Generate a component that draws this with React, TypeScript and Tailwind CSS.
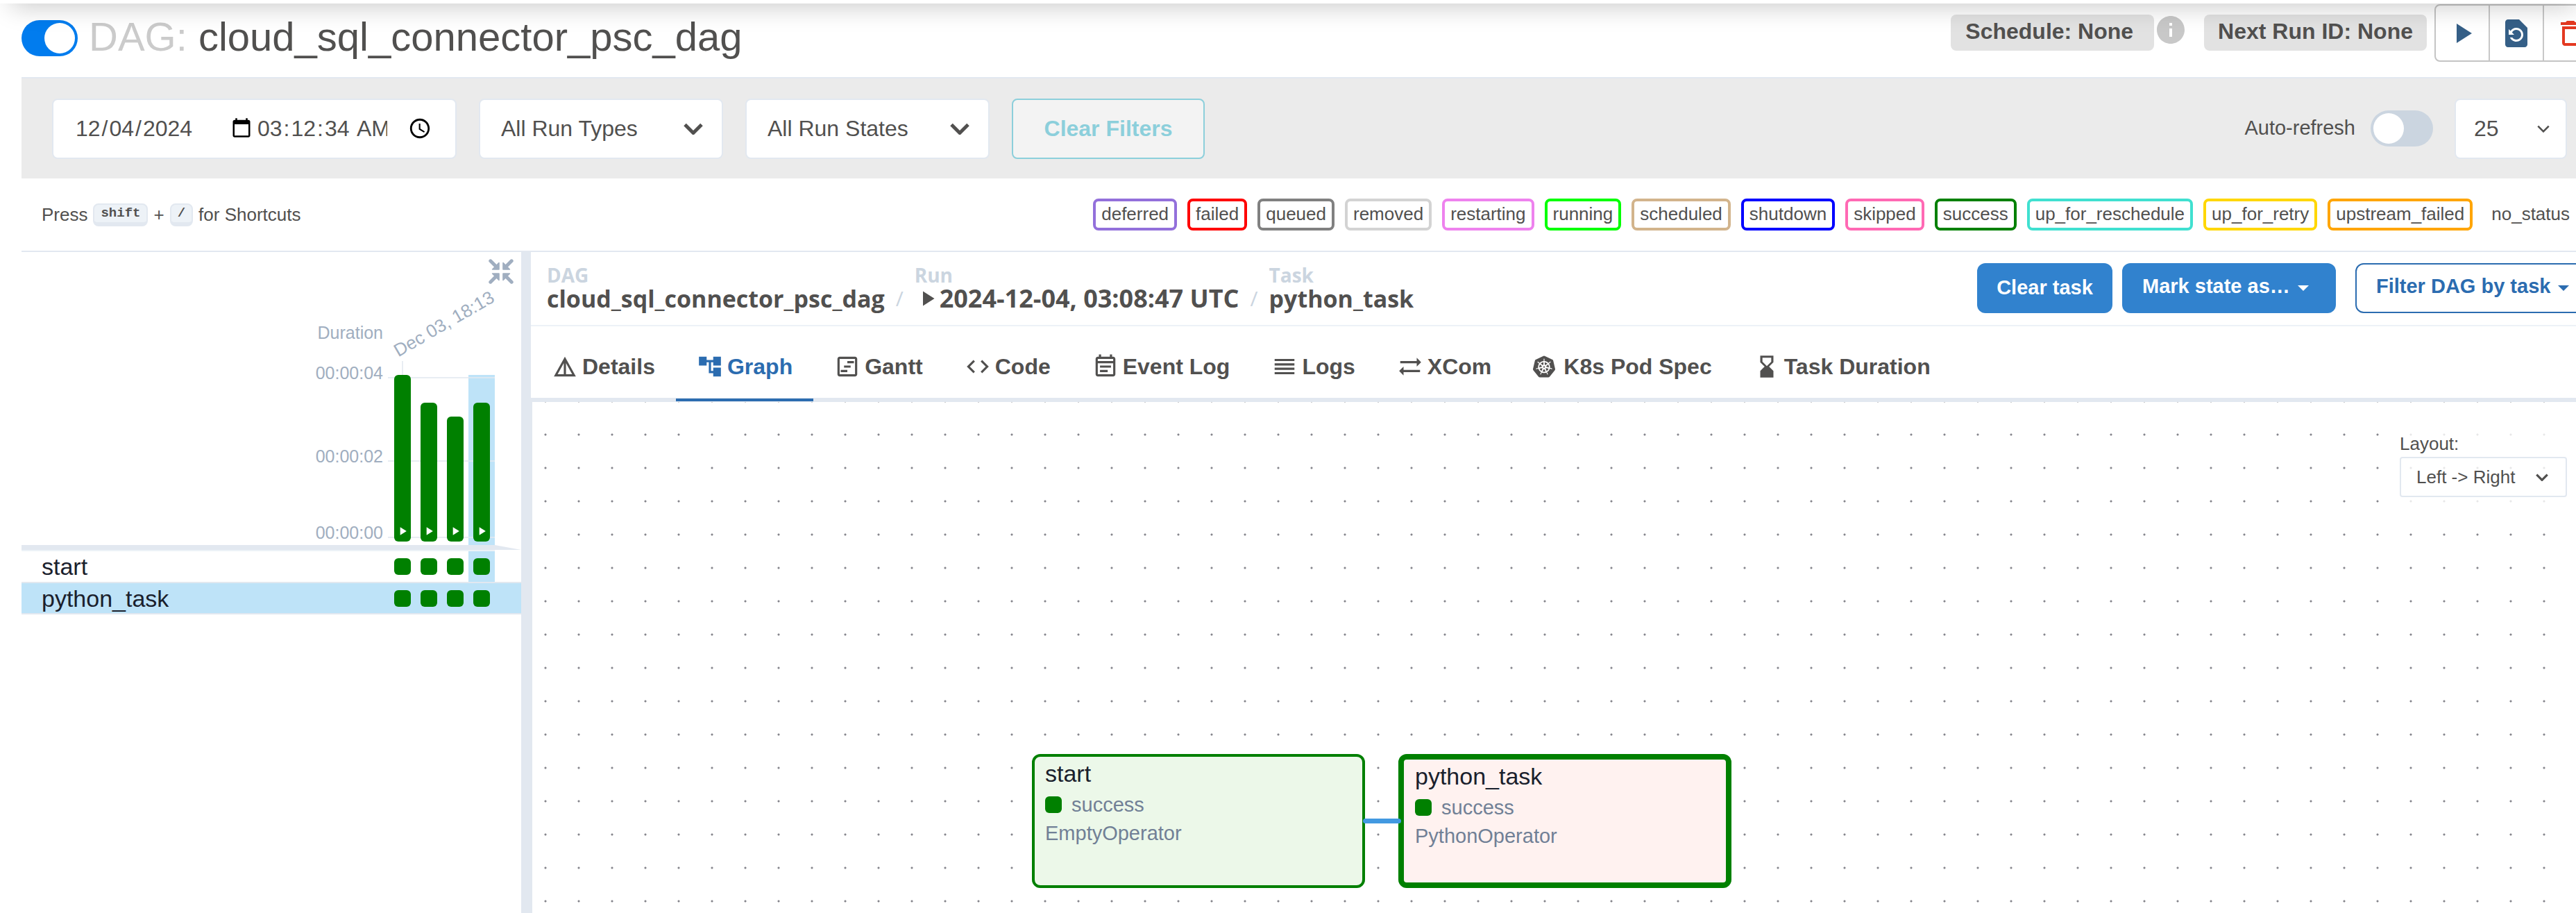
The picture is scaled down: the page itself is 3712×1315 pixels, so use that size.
import React, { useState } from "react";
import {
  MdPlayArrow,
  MdRestorePage,
  MdDeleteOutline,
  MdInfo,
  MdDetails,
  MdAccountTree,
  MdOutlineViewTimeline,
  MdCode,
  MdOutlineEventNote,
  MdReorder,
  MdSyncAlt,
  MdHourglassBottom,
} from "react-icons/md";
import { SiKubernetes } from "react-icons/si";

const states = [
  { name: "deferred", border: "border-[#9370db]" },
  { name: "failed", border: "border-[#ff0000]" },
  { name: "queued", border: "border-[#808080]" },
  { name: "removed", border: "border-[#d3d3d3]" },
  { name: "restarting", border: "border-[#ee82ee]" },
  { name: "running", border: "border-[#00ff00]" },
  { name: "scheduled", border: "border-[#d2b48c]" },
  { name: "shutdown", border: "border-[#0000ff]" },
  { name: "skipped", border: "border-[#ff69b4]" },
  { name: "success", border: "border-[#008000]" },
  { name: "up_for_reschedule", border: "border-[#40e0d0]" },
  { name: "up_for_retry", border: "border-[#ffd700]" },
  { name: "upstream_failed", border: "border-[#ffa500]" },
  { name: "no_status", border: "border-transparent" },
];

const runs = [
  { id: 1, height: 240, selected: false },
  { id: 2, height: 200, selected: false },
  { id: 3, height: 180, selected: false },
  { id: 4, height: 200, selected: true },
];

const tabs = [
  { name: "Details", icon: <MdDetails size={38} /> },
  { name: "Graph", icon: <MdAccountTree size={38} /> },
  { name: "Gantt", icon: <MdOutlineViewTimeline size={38} /> },
  { name: "Code", icon: <MdCode size={38} /> },
  { name: "Event Log", icon: <MdOutlineEventNote size={38} /> },
  { name: "Logs", icon: <MdReorder size={38} /> },
  { name: "XCom", icon: <MdSyncAlt size={38} /> },
  { name: "K8s Pod Spec", icon: <SiKubernetes size={32} /> },
  { name: "Task Duration", icon: <MdHourglassBottom size={38} /> },
];

function Chevron({ width, stroke }: { width: number; stroke: number }) {
  return (
    <svg
      width={width}
      height={Math.round(width * 0.62)}
      viewBox="0 0 28 17"
      fill="none"
      stroke="#51504f"
      strokeWidth={stroke}
      className="pointer-events-none col-start-1 row-start-1 justify-self-end"
    >
      <path d="M2 2.5 14 14.5 26 2.5" />
    </svg>
  );
}

function CollapseIcon() {
  return (
    <svg width="36" height="36" viewBox="0 0 36 36" stroke="#a0aec0" fill="#a0aec0">
      {[0, 90, 180, 270].map((angle) => (
        <g key={angle} transform={`rotate(${angle} 18 18)`}>
          <path d="M2.8 2.8 10 10" strokeWidth="5" strokeLinecap="round" />
          <path d="M15 5.6V15H5.6z" strokeWidth="1.6" strokeLinejoin="round" />
        </g>
      ))}
    </svg>
  );
}

function Picker({
  label,
  value,
  box,
  chevron,
}: {
  label: string;
  value: string;
  box: string;
  chevron: React.ReactNode;
}) {
  return (
    <div className={`grid items-center border-2 border-[#e2e8f0] ${box}`}>
      <select
        aria-label={label}
        className="col-start-1 row-start-1 h-full w-full appearance-none bg-transparent outline-none"
      >
        <option>{value}</option>
      </select>
      {chevron}
    </div>
  );
}

function Header() {
  const [active, setActive] = useState(true);
  return (
    <header className="flex h-[106px] items-start justify-between pl-[31px]">
      <div className="flex items-center pt-2">
        <label className="flex cursor-pointer items-center pt-1">
          <input
            type="checkbox"
            role="switch"
            aria-label="Pause or unpause DAG"
            checked={active}
            onChange={() => setActive(!active)}
            className="peer sr-only"
          />
          <span className="flex h-[52px] w-[81px] justify-end rounded-full bg-[#017cee] p-1">
            <span className="h-11 w-11 rounded-full bg-white" />
          </span>
        </label>
        <h1 className="pl-4 text-[58px] leading-[80px] whitespace-nowrap">
          <span className="text-[#cbcbcb]">DAG:</span> cloud_sql_connector_psc_dag
        </h1>
      </div>
      <div className="flex shrink-0 items-start overflow-hidden text-[32px] font-bold whitespace-nowrap">
        <span className="mt-4 h-[52px] rounded-lg bg-[#e2e2e2] pr-[30px] pl-[21px] leading-[48px]">
          Schedule: None
        </span>
        <MdInfo size={48} color="#c8c8c8" className="mt-[14px]" />
        <span className="mt-4 ml-6 h-[52px] rounded-lg bg-[#e2e2e2] px-5 leading-[48px]">
          Next Run ID: None
        </span>
        <div className="mt-px -mr-8 ml-[11px] flex h-[83px] divide-x-2 divide-[#c8c8c8] rounded-lg border-2 border-[#c4c4c4]">
          <button type="button" aria-label="Trigger DAG" className="px-[14px]">
            <MdPlayArrow size={48} color="#355f87" />
          </button>
          <button type="button" aria-label="Reparse DAG" className="px-[14px]">
            <MdRestorePage size={48} color="#355f87" />
          </button>
          <button type="button" aria-label="Delete DAG" className="px-[14px]">
            <MdDeleteOutline size={48} color="#e43921" />
          </button>
        </div>
      </div>
    </header>
  );
}

function FilterBar() {
  return (
    <section className="ml-[31px] flex h-[146px] items-center justify-between border-t-2 border-[#e2e8f0] bg-[#ebebeb] pr-[13px] pl-11 text-[32px]">
      <div className="flex h-[87px] items-stretch gap-8">
        <div className="flex w-[583px] items-center gap-[3px] overflow-hidden rounded-lg border-2 border-[#e2e8f0] bg-white px-[30px]">
          <input
            type="date"
            aria-label="Run date"
            defaultValue="2024-12-04"
            className="w-[259px] outline-none [&::-webkit-datetime-edit-day-field]:px-[2px] [&::-webkit-datetime-edit-month-field]:px-[2px] [&::-webkit-datetime-edit-year-field]:px-[2px]"
          />
          <input
            type="time"
            step={1}
            aria-label="Run time"
            defaultValue="03:12:34"
            className="w-[256px] outline-none [&::-webkit-calendar-picker-indicator]:ms-[27px] [&::-webkit-datetime-edit-ampm-field]:px-[2px] [&::-webkit-datetime-edit-hour-field]:px-[2px] [&::-webkit-datetime-edit-minute-field]:px-[2px] [&::-webkit-datetime-edit-second-field]:px-[2px]"
          />
        </div>
        <Picker
          label="Run types"
          value="All Run Types"
          box="w-[352px] rounded-lg bg-white pr-[27px] pl-[30px]"
          chevron={<Chevron width={28} stroke={5} />}
        />
        <Picker
          label="Run states"
          value="All Run States"
          box="w-[352px] rounded-lg bg-white pr-[27px] pl-[30px]"
          chevron={<Chevron width={28} stroke={5} />}
        />
        <button
          type="button"
          className="w-[278px] rounded-lg border-2 border-[#8ccfdb] bg-[#f3f3f3] font-bold text-[#8ccfdb]"
        >
          Clear Filters
        </button>
      </div>
      <div className="flex h-[87px] items-center">
        <label className="flex items-center gap-[22px] text-[29px]">
          Auto-refresh
          <input type="checkbox" role="switch" className="peer sr-only" />
          <span className="flex h-[52px] w-[90px] rounded-full bg-[#cbd5e0] p-1">
            <span className="h-11 w-11 rounded-full bg-white" />
          </span>
        </label>
        <Picker
          label="Number of runs"
          value="25"
          box="ml-[31px] h-full w-[162px] rounded-lg bg-white pr-[23px] pl-[26px]"
          chevron={<Chevron width={18} stroke={4} />}
        />
      </div>
    </section>
  );
}

function Legend() {
  return (
    <section className="ml-[31px] flex h-[106px] items-center justify-between overflow-hidden border-b-2 border-[#e2e8f0] pl-[29px] text-[26px]">
      <p className="flex items-center gap-2 whitespace-nowrap">
        Press
        <kbd className="rounded-lg border-2 border-b-6 border-[#e2e8f0] bg-[#edf2f7] px-[9px] font-['Liberation_Mono'] text-[19px] leading-[25px] font-bold">
          shift
        </kbd>
        +
        <kbd className="rounded-lg border-2 border-b-6 border-[#e2e8f0] bg-[#edf2f7] px-[9px] font-['Liberation_Mono'] text-[19px] leading-[25px] font-bold">
          /
        </kbd>
        for Shortcuts
      </p>
      <ul className="-mr-[3px] flex gap-[15px]">
        {states.map((s) => (
          <li
            key={s.name}
            className={`h-[46px] rounded-lg border-4 px-2 leading-[36px] ${s.border}`}
          >
            {s.name}
          </li>
        ))}
      </ul>
    </section>
  );
}

function DurationChart() {
  return (
    <div className="flex h-[422px] justify-end pr-[38px]">
      <div className="flex w-[120px] flex-col pr-[9px] text-right text-[25px] leading-[30px] text-[#a0aec0]">
        <span className="mt-[101px]">Duration</span>
        <span className="mt-7">00:00:04</span>
        <span className="mt-[90px]">00:00:02</span>
        <span className="mt-20">00:00:00</span>
      </div>
      <div className="relative flex h-full items-end">
        {runs.map((run) => (
          <div
            key={run.id}
            className={`h-[245px] w-[38px] ${run.selected ? "bg-[#bee3f8]" : ""}`}
          />
        ))}
        <div className="absolute bottom-[240px] -left-[2px] h-[2px] w-[154px] bg-[#e2e8f0]/80" />
        <div className="absolute bottom-[120px] -left-[2px] h-[2px] w-[154px] bg-[#e2e8f0]/80" />
        <div className="absolute bottom-[10px] -left-[2px] h-[2px] w-[154px] bg-[#e2e8f0]/80" />
        <div className="absolute bottom-[245px] left-[18px] h-5 w-[2px] bg-[#e2e8f0]/80" />
        <span className="absolute bottom-[267px] left-[15px] origin-bottom-left -rotate-30 text-[26px] leading-[26px] whitespace-nowrap text-[#a0aec0]">
          Dec 03, 18:13
        </span>
        <div className="absolute inset-x-0 bottom-[5px] flex items-end justify-around">
          {runs.map((run) => (
            <button
              key={run.id}
              type="button"
              aria-label={`Run ${run.id}`}
              className="flex w-6 items-end justify-center rounded-md bg-[#008000] pb-[5px]"
              style={{ height: run.height }}
            >
              <MdPlayArrow size={20} color="#ffffff" />
            </button>
          ))}
        </div>
      </div>
    </div>
  );
}

function TaskRow({ name, selected }: { name: string; selected: boolean }) {
  return (
    <tr className={`h-[45px] border-b-2 border-[#e2e8f0] ${selected ? "bg-[#bee3f8]" : ""}`}>
      <th scope="row" className="pl-[29px] text-left text-[34px] leading-[42px] font-normal text-[#1a202c]">
        {name}
      </th>
      {runs.map((run) => (
        <td key={run.id} className={`w-[38px] ${run.selected ? "bg-[#bee3f8]" : ""}`}>
          <div className="mx-auto h-6 w-6 rounded-md bg-[#008000]" />
        </td>
      ))}
      <td className="w-[38px]" />
    </tr>
  );
}

function GridPanel() {
  return (
    <aside className="relative w-[720px] shrink-0">
      <button type="button" aria-label="Collapse tasks" className="absolute top-[10px] right-[11px]">
        <CollapseIcon />
      </button>
      <DurationChart />
      <div className="flex h-[9px]">
        <div className="flex-1 border-b-2 border-[#edf2f7] bg-[#e2e8f0]" />
        <div className="h-[7px] w-[38px] bg-[#e2e8f0] [clip-path:polygon(0_0,100%_100%,0_100%)]" />
      </div>
      <table className="w-full border-collapse">
        <tbody>
          <TaskRow name="start" selected={false} />
          <TaskRow name="python_task" selected />
        </tbody>
      </table>
    </aside>
  );
}

function Crumb({ label, children }: { label: string; children: React.ReactNode }) {
  return (
    <div>
      <div className="text-[28px] leading-8 text-[#cbd5e0]">{label}</div>
      <div className="flex items-center text-[34px] leading-9">{children}</div>
    </div>
  );
}

function DetailsHeader() {
  return (
    <div className="flex h-[107px] items-start justify-between overflow-hidden border-b-2 border-[#edf2f7] pl-[23px]">
      <nav
        aria-label="Breadcrumb"
        className="flex items-end gap-4 pt-[17px] font-['Open_Sans','Noto_Sans',sans-serif] font-bold whitespace-nowrap"
      >
        <Crumb label="DAG">
          <a href="#dag">cloud_sql_connector_psc_dag</a>
        </Crumb>
        <span className="text-[30px] leading-9 font-normal text-[#cbd5e0]">/</span>
        <Crumb label="Run">
          <MdPlayArrow size={36} />
          <a href="#run" className="text-[36px]">
            2024-12-04, 03:08:47 UTC
          </a>
        </Crumb>
        <span className="text-[30px] leading-9 font-normal text-[#cbd5e0]">/</span>
        <Crumb label="Task">
          <a href="#task">python_task</a>
        </Crumb>
      </nav>
      <div className="-mr-5 flex h-[88px] shrink-0 pt-4 text-[29px] font-bold whitespace-nowrap">
        <button type="button" className="w-[195px] rounded-xl bg-[#3182ce] text-white">
          Clear task
        </button>
        <button
          type="button"
          className="ml-[14px] flex w-[308px] items-center rounded-xl bg-[#3182ce] pb-1 pl-[29px] text-white"
        >
          Mark state as…
          <Caret />
        </button>
        <button
          type="button"
          className="ml-7 flex w-[338px] items-center rounded-xl border-2 border-[#2b6cb0] pb-1 pl-[28px] text-[#2b6cb0]"
        >
          Filter DAG by task
          <Caret />
        </button>
      </div>
    </div>
  );
}

function Caret() {
  return (
    <svg width="16" height="8" viewBox="0 0 16 8" className="mt-1 ml-[11px]">
      <path d="M0 0h16L8 8z" fill="currentColor" />
    </svg>
  );
}

function TabBar() {
  const [tab, setTab] = useState("Graph");
  return (
    <div role="tablist" className="flex h-[109px] border-b-6 border-[#e2e8f0] text-[32px] font-bold whitespace-nowrap">
      {tabs.map((t) => (
        <button
          key={t.name}
          type="button"
          role="tab"
          aria-selected={tab === t.name}
          onClick={() => setTab(t.name)}
          className={`-mb-[5px] flex items-center gap-[6px] border-b-4 px-[30px] pt-3 ${
            tab === t.name ? "border-[#2b6cb0] text-[#2b6cb0]" : "border-transparent"
          }`}
        >
          <span className="w-[38px]">{t.icon}</span>
          {t.name}
        </button>
      ))}
    </div>
  );
}

function TaskNode({
  name,
  operator,
  box,
}: {
  name: string;
  operator: string;
  box: string;
}) {
  return (
    <div className={`absolute h-[193px] w-[480px] rounded-xl border-[#008000] text-[29px] text-[#718096] ${box}`}>
      <div className="text-[34px] leading-[42px] text-[#1a202c]">{name}</div>
      <div className="mt-1 flex items-center gap-[14px] leading-[40px]">
        <span className="h-6 w-6 rounded-md bg-[#008000]" />
        success
      </div>
      <div className="leading-[42px]">{operator}</div>
    </div>
  );
}

function GraphCanvas() {
  return (
    <div className="relative min-h-[736px] flex-1 overflow-hidden border-l-2 border-[#e2e8f0] bg-[radial-gradient(circle,#85858c_1px,transparent_2px)] bg-[size:48px_48px] bg-[position:-5px_23px]">
      <div className="absolute top-[42px] right-0 flex w-[262px] flex-col bg-white/80 pr-[13px] pb-6 pl-2 text-[26px]">
        <label htmlFor="layout" className="leading-[37px]">
          Layout:
        </label>
        <div className="grid h-[58px] items-center rounded-sm border-2 border-[#e2e8f0] pr-[25px] pl-[22px]">
          <select
            id="layout"
            className="col-start-1 row-start-1 h-full w-full appearance-none bg-transparent outline-none"
          >
            <option>Left -&gt; Right</option>
          </select>
          <Chevron width={18} stroke={5} />
        </div>
      </div>
      <TaskNode name="start" operator="EmptyOperator" box="top-[507px] left-[720px] border-4 bg-[#ecf8e9] px-[15px] pt-[3px]" />
      <TaskNode name="python_task" operator="PythonOperator" box="top-[507px] left-[1248px] border-8 bg-[#fff2f0] px-4 pt-[3px]" />
      <div className="absolute top-[600px] left-[1197px] h-[7px] w-[55px] rounded-sm bg-[#4299e1]" />
    </div>
  );
}

export default function App() {
  return (
    <div className="relative flex min-h-screen flex-col overflow-hidden bg-white pt-[5px] font-['Liberation_Sans',Arial,sans-serif] text-[#51504f]">
      <div className="pointer-events-none absolute inset-x-0 top-[5px] h-12 overflow-hidden">
        <div className="-mt-10 ml-4 h-10 shadow-[0_4px_36px_rgba(0,0,0,0.22)]" />
      </div>
      <Header />
      <FilterBar />
      <Legend />
      <main className="ml-[31px] flex flex-1">
        <GridPanel />
        <div className="w-[14px] shrink-0 bg-[#e2e8f0]" />
        <div className="flex min-w-0 flex-1 flex-col">
          <DetailsHeader />
          <TabBar />
          <GraphCanvas />
        </div>
      </main>
    </div>
  );
}
